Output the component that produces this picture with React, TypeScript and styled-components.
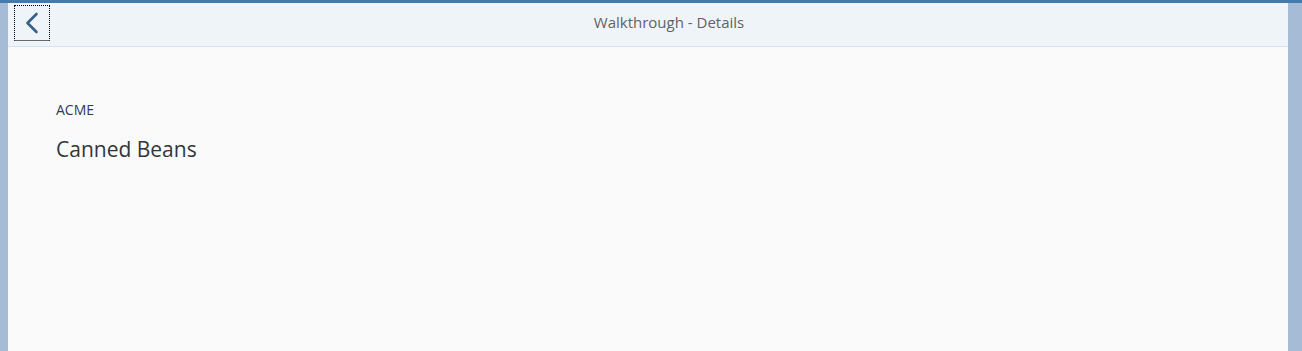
import React from "react";
import styled, { createGlobalStyle } from "styled-components";

const Global = createGlobalStyle`
  html, body { margin: 0; padding: 0; height: 100%; }
  body { background: #a7bfd9; font-family: "Open Sans", "Noto Sans", Arial, sans-serif; overflow: hidden; }
  #root { height: 100%; }
`;

const Shell = styled.div`
  height: 351px;
  display: flex;
  flex-direction: column;
  background: linear-gradient(to right, #a6bcd6 0%, #b3c8de 50%, #a6bcd6 100%);
`;

const TopStrip = styled.div`
  height: 3px;
  background: #427cac;
  flex: none;
`;

const Stage = styled.div`
  flex: 1;
  display: flex;
  padding: 0 14px 0 8px;
`;

const Page = styled.div`
  flex: 1;
  display: flex;
  flex-direction: column;
  background: #fafafa;
`;

const Header = styled.header`
  height: 41px;
  flex: none;
  display: flex;
  align-items: flex-start;
  background: #eff4f9;
  border-bottom: 1px solid #d3e3f3;
  padding: 2px 6px 0;
  box-sizing: content-box;
`;

const BackButton = styled.button`
  width: 36px;
  height: 36px;
  box-sizing: border-box;
  border: 1px dotted #000;
  border-bottom: 1px solid #6a6d70;
  background: transparent;
  padding: 0;
  display: flex;
  align-items: center;
  justify-content: center;
  flex: none;
  cursor: pointer;
`;

const Title = styled.h1`
  flex: 1;
  margin: 0;
  padding-left: 42px;
  text-align: center;
  font-size: 15px;
  line-height: 34px;
  font-weight: normal;
  color: #5f6366;
`;

const Spacer = styled.div`
  width: 36px;
  flex: none;
`;

const Content = styled.main`
  padding: 55px 48px;
  display: flex;
  flex-direction: column;
`;

const Intro = styled.div`
  font-size: 14px;
  color: #32385a;
  line-height: 16px;
`;

const ObjectTitle = styled.div`
  margin-top: 18px;
  font-size: 21px;
  color: #32363a;
  line-height: 26px;
`;

export default function App() {
  return (
    <>
      <Global />
      <Shell>
        <TopStrip />
        <Stage>
          <Page>
            <Header>
              <BackButton aria-label="Back">
                <svg width="16" height="24" viewBox="0 0 16 24">
                  <path d="M12.5 3 L3.5 12 L12.5 21" fill="none" stroke="#346187" strokeWidth="2.6" strokeLinecap="round" strokeLinejoin="round" />
                </svg>
              </BackButton>
              <Title>Walkthrough - Details</Title>
              <Spacer />
            </Header>
            <Content>
              <Intro>ACME</Intro>
              <ObjectTitle>Canned Beans</ObjectTitle>
            </Content>
          </Page>
        </Stage>
      </Shell>
    </>
  );
}
